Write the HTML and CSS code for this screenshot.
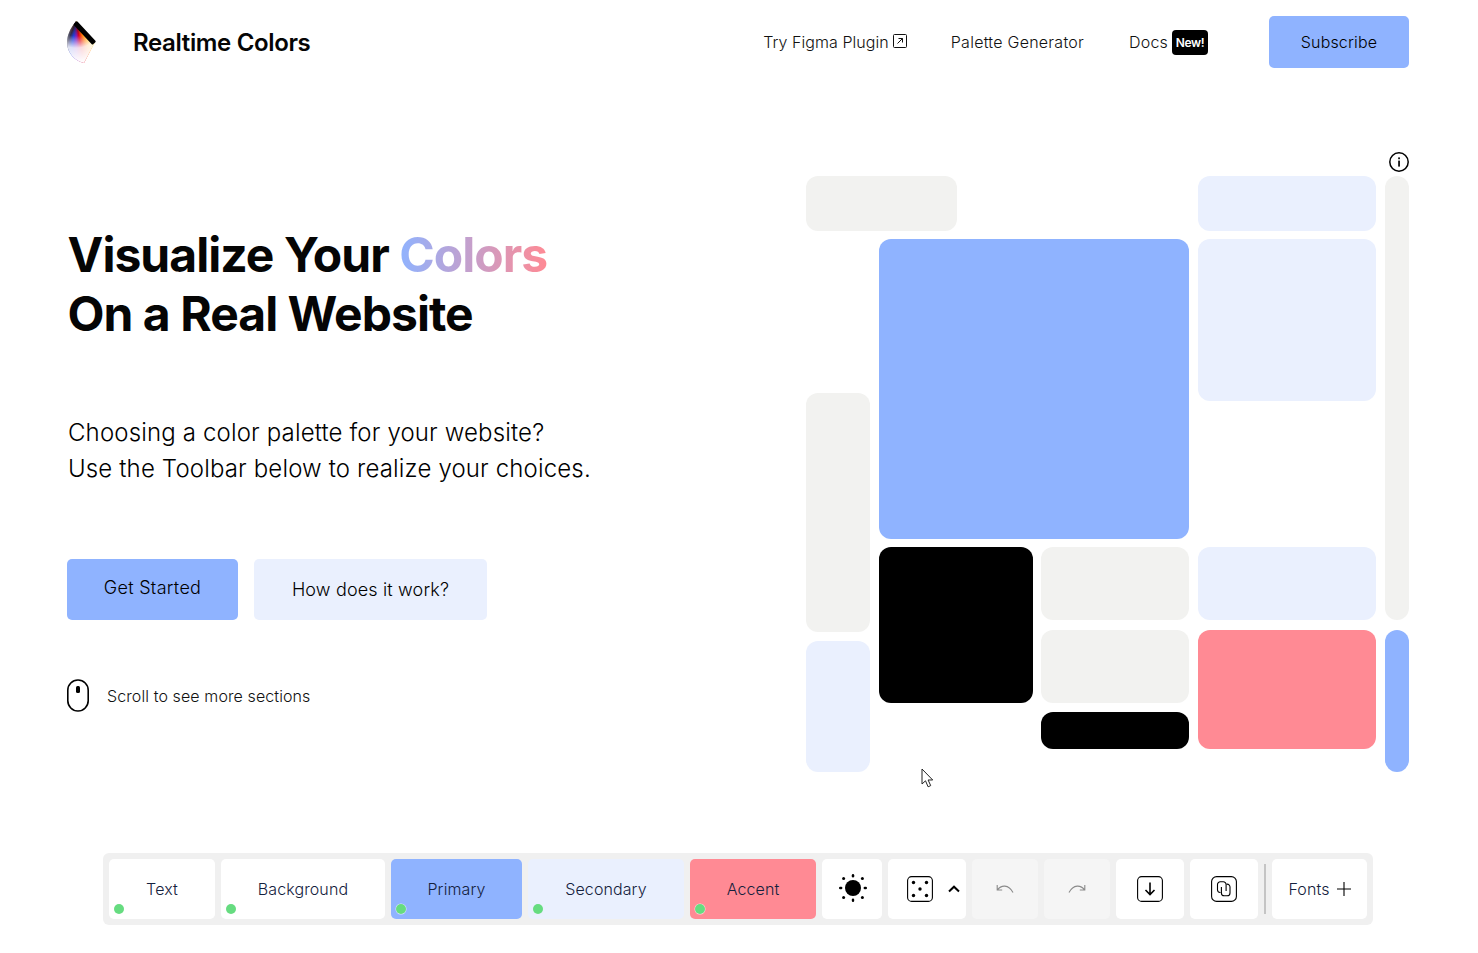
FILE: index.html
```html
<!DOCTYPE html>
<html lang="en">
<head>
<meta charset="utf-8">
<title>Realtime Colors</title>
<link rel="stylesheet" href="styles.css">
</head>
<body>
<div class="page">
  <header class="nav">
    <div class="brand">
      <div class="logo"><span class="logo-fan"></span><span class="logo-bar"></span></div>
      <span class="brand-name">Realtime Colors</span>
    </div>
    <nav class="links">
      <a class="link figma">Try Figma Plugin
        <svg class="ext" width="14" height="14" viewBox="0 0 14 14" fill="none" stroke="#111" stroke-width="1"><rect x="0.5" y="0.5" width="13" height="13" rx="1"/><path d="M4.500 9.500 9.500 4.500M5.500 4.500h4v4"/></svg>
      </a>
      <a class="link palette">Palette Generator</a>
      <a class="link docs">Docs <span class="new">New!</span></a>
      <a class="btn subscribe">Subscribe</a>
    </nav>
  </header>

  <main class="hero">
    <section class="copy">
      <h1>Visualize Your <span class="grad">Colors</span><br>On a Real Website</h1>
      <p class="lead">Choosing a color palette for your website?<br>Use the Toolbar below to realize your choices.</p>
      <div class="actions">
        <a class="btn start">Get Started</a>
        <a class="btn how">How does it work?</a>
      </div>
      <div class="scroll">
        <svg width="23" height="33" viewBox="0 0 23 33" fill="none"><rect x="0.800" y="1" width="20.400" height="31" rx="10.200" stroke="#000" stroke-width="1.600"/><rect x="9" y="7" width="4" height="7" rx="1.500" fill="#000"/></svg>
        <span>Scroll to see more sections</span>
      </div>
    </section>

    <section class="side">
      <svg class="info" width="20" height="20" viewBox="0 0 20 20" fill="none"><circle cx="10" cy="10" r="9.200" stroke="#000" stroke-width="1.500"/><rect x="9.200" y="8.600" width="1.700" height="6" fill="#000"/><rect x="9.200" y="5.400" width="1.700" height="1.800" fill="#000"/></svg>
      <div class="mosaic">
        <div class="m m-a gray"></div>
        <div class="m m-b sec"></div>
        <div class="m m-c gray"></div>
        <div class="m m-d pri"></div>
        <div class="m m-e sec"></div>
        <div class="m m-f gray"></div>
        <div class="m m-g sec"></div>
        <div class="m m-h blk"></div>
        <div class="m m-i gray"></div>
        <div class="m m-j sec"></div>
        <div class="m m-k gray"></div>
        <div class="m m-l acc"></div>
        <div class="m m-m pri"></div>
        <div class="m m-n blk"></div>
      </div>
    </section>
  </main>

  <svg class="cursor" width="13" height="20" viewBox="0 0 13 20" fill="#fff" stroke="#222" stroke-width="1"><path d="M1 1v15l3.500-3.200 2.600 6 2.600-1.200-2.600-5.600h4.600z"/></svg>

  <div class="toolbar">
    <button class="tool w-text"><span>Text</span><i class="dot"></i></button>
    <button class="tool w-bg"><span>Background</span><i class="dot"></i></button>
    <button class="tool w-pri"><span>Primary</span><i class="dot ring"></i></button>
    <button class="tool w-sec"><span>Secondary</span><i class="dot"></i></button>
    <button class="tool w-acc"><span>Accent</span><i class="dot ring"></i></button>
    <button class="tool w-sun" aria-label="Theme">
      <svg class="sun" width="30" height="30" viewBox="0 0 30 30" fill="#000"><circle cx="15" cy="15" r="8"/><rect x="13.800" y="1" width="2.400" height="3.400" rx="1.200"/><rect x="13.800" y="25.600" width="2.400" height="3.400" rx="1.200"/><rect x="1" y="13.800" width="3.400" height="2.400" rx="1.200"/><rect x="25.600" y="13.800" width="3.400" height="2.400" rx="1.200"/><circle cx="5.600" cy="5.600" r="1.500"/><circle cx="24.400" cy="5.600" r="1.500"/><circle cx="5.600" cy="24.400" r="1.500"/><circle cx="24.400" cy="24.400" r="1.500"/></svg>
    </button>
    <button class="tool w-dice" aria-label="Randomize">
      <svg width="26" height="26" viewBox="0 0 26 26" fill="#000"><rect x="0.600" y="0.600" width="24.800" height="24.800" rx="4" fill="none" stroke="#000" stroke-width="1.100"/><circle cx="6.500" cy="6.500" r="1.700"/><circle cx="19.500" cy="6.500" r="1.700"/><circle cx="13" cy="13" r="1.700"/><circle cx="6.500" cy="19.500" r="1.700"/><circle cx="19.500" cy="19.500" r="1.700"/></svg>
      <svg class="chev" width="12" height="8" viewBox="0 0 12 8" fill="none" stroke="#000" stroke-width="2"><path d="M1 6.500 6 1.700l5 4.800"/></svg>
    </button>
    <button class="tool w-hist off" aria-label="Undo">
      <svg width="18" height="10" viewBox="0 0 18 10" fill="none" stroke="#8a8a8a" stroke-width="1.100"><path d="M1.200 1v5h5M1.400 5.800C5 1 12.500-.2 17 8.600"/></svg>
    </button>
    <button class="tool w-hist off" aria-label="Redo">
      <svg width="18" height="10" viewBox="0 0 18 10" fill="none" stroke="#8a8a8a" stroke-width="1.100"><path d="M16.800 1v5h-5M16.600 5.800C13 1 5.500-.2 1 8.600"/></svg>
    </button>
    <button class="tool w-act" aria-label="Export">
      <svg class="dl" width="26" height="26" viewBox="0 0 26 26" fill="none" stroke="#000"><rect x="0.600" y="0.600" width="24.800" height="24.800" rx="4" stroke-width="1.100"/><path d="M13 6.500v12M8.500 14l4.500 4.500 4.500-4.500" stroke-width="1.600"/></svg>
    </button>
    <button class="tool w-act" aria-label="Share">
      <svg width="26" height="26" viewBox="0 0 26 26" fill="none" stroke="#000" stroke-width="1.100"><rect x="0.600" y="0.600" width="24.800" height="24.800" rx="5"/><path d="M9.500 16.500A2.800 2.800 0 0 1 6.500 14V8.500a2.800 2.800 0 0 1 2.800-2.800h3a2.800 2.800 0 0 1 2.800 2.800V15"/><path d="M15.500 8.200h.3a2.800 2.800 0 0 1 3.200 2.800v6a2.800 2.800 0 0 1-2.800 2.800h-3a2.800 2.800 0 0 1-2.800-2.800V11"/></svg>
    </button>
    <span class="sep"></span>
    <button class="tool w-fonts"><span>Fonts</span>
      <svg width="14" height="14" viewBox="0 0 14 14" stroke="#000" stroke-width="1.100"><path d="M7 0v14M0 7h14"/></svg>
    </button>
  </div>
</div>
</body>
</html>
```
FILE: styles.css
```css
* { box-sizing: border-box; }
html, body { margin: 0; height: 100%; }
body {
  background: #fff;
  color: #0a0a0a;
  font-family: Inter, "Liberation Sans", sans-serif;
  overflow: hidden;
}
a { color: inherit; text-decoration: none; }
.page { position: relative; width: 1478px; height: 953px; }

.nav {
  display: flex;
  justify-content: space-between;
  align-items: center;
  padding: 16px 69px 0 67px;
}
.brand { display: flex; align-items: center; gap: 36px; }
.logo { position: relative; width: 30px; height: 46px; }
.logo-fan {
  position: absolute;
  left: 0;
  top: 2px;
  width: 30px;
  height: 44px;
  background:
    radial-gradient(circle at 9px 0, rgba(30,10,10,.9) 0, rgba(60,10,0,.45) 8px, rgba(255,255,255,0) 15px, rgba(255,255,255,.85) 27px, #fff 42px),
    conic-gradient(from 135deg at 9px 0, #ffe000 0deg, #ffc000 12deg, #ff7000 22deg, #e00020 34deg, #8020c0 44deg, #2040e0 54deg, #303050 66deg, #888 84deg);
  clip-path: path("M9 0 C3 8 0 14 0 21 C0 32 8 40 17 42 L28 21 Z");
}
.logo-bar {
  position: absolute;
  left: 9.500px;
  top: 2px;
  width: 28px;
  height: 5px;
  background: #000;
  border-radius: 1px;
  transform-origin: 0 0;
  transform: rotate(47deg);
}
.brand-name { font-size: 24px; font-weight: 600; letter-spacing: -0.35px; color: #050505; }
.links { display: flex; align-items: center; }
.link { font-size: 16px; font-weight: 300; color: #111; letter-spacing: 0.25px; white-space: nowrap; }
.figma { display: flex; align-items: center; gap: 4px; margin-right: 44px; letter-spacing: 0.06px; }
.ext { margin-top: -3px; }
.palette { margin-right: 45px; }
.docs { display: flex; align-items: center; gap: 4px; margin-right: 61px; letter-spacing: 0.2px; }
.new {
  background: #000;
  color: #fff;
  font-size: 12px;
  font-weight: 600;
  letter-spacing: -0.35px;
  border-radius: 4px;
  width: 36px;
  height: 25px;
  display: flex;
  align-items: center;
  justify-content: center;
}
.btn { display: flex; align-items: center; justify-content: center; border-radius: 5px; color: #111a2c; }
.subscribe { width: 140px; height: 52px; background: #8fb3ff; font-size: 16px; font-weight: 300; letter-spacing: 0.16px; color: #000; }

.hero {
  display: flex;
  justify-content: space-between;
  padding: 0 69px 0 68px;
  margin-top: 85px;
}
.copy { display: flex; flex-direction: column; padding-top: 72px; }
h1 {
  margin: 0 0 0 -0.5px;
  font-size: 48px;
  line-height: 59px;
  font-weight: 700;
  letter-spacing: -0.96px;
  color: #050505;
}
.grad {
  background: linear-gradient(90deg, #8fb3ff, #ff8a94);
  -webkit-background-clip: text;
  background-clip: text;
  color: transparent;
}
.lead { margin: 72px 0 0; font-size: 24px; font-weight: 300; line-height: 36px; letter-spacing: 0.15px; color: #000; }
.actions { display: flex; gap: 16px; margin: 72px 0 0 -1px; }
.start { width: 171px; height: 61px; background: #8fb3ff; font-size: 18px; font-weight: 300; letter-spacing: 0.3px; padding-bottom: 4px; color: #000; }
.how { width: 233px; height: 61px; background: #eaf0fe; font-size: 18px; font-weight: 300; letter-spacing: 0.16px; color: #000; }
.scroll { display: flex; align-items: center; gap: 17px; margin: 59px 0 0 -1px; font-size: 16px; font-weight: 300; letter-spacing: 0.1px; color: #111; }

.side { display: flex; flex-direction: column; align-items: flex-end; }
.info { display: block; margin-top: -1px; }
.mosaic {
  margin-top: 4px;
  display: grid;
  grid-template-columns: 64px 9px 78px 76px 8px 148px 9px 178px 9px 24px;
  grid-template-rows: 55px 8px 154px 8px 138px 8px 73px 10px 2px 9px 62px 9px 37px 23px;
}
.m { border-radius: 12px; }
.gray { background: #f2f2f0; }
.sec { background: #eaf0fe; }
.pri { background: #8fb3ff; }
.blk { background: #000; }
.acc { background: #ff8a94; }
.m-a { grid-area: 1 / 1 / 2 / 4; }
.m-b { grid-area: 1 / 8 / 2 / 9; }
.m-c { grid-area: 1 / 10 / 8 / 11; }
.m-d { grid-area: 3 / 3 / 6 / 7; }
.m-e { grid-area: 3 / 8 / 5 / 9; }
.m-f { grid-area: 4 / 1 / 10 / 2; }
.m-g { grid-area: 11 / 1 / 15 / 2; }
.m-h { grid-area: 7 / 3 / 12 / 5; }
.m-i { grid-area: 7 / 6 / 8 / 7; }
.m-j { grid-area: 7 / 8 / 8 / 9; }
.m-k { grid-area: 9 / 6 / 12 / 7; }
.m-l { grid-area: 9 / 8 / 14 / 9; }
.m-m { grid-area: 9 / 10 / 15 / 11; }
.m-n { grid-area: 13 / 6 / 14 / 7; }

.cursor { position: absolute; left: 921px; top: 768px; }

.toolbar {
  position: absolute;
  left: 103px;
  top: 853px;
  width: 1270px;
  height: 72px;
  padding: 6px;
  display: flex;
  align-items: center;
  gap: 6px;
  background: #f0f0f0;
  border-radius: 6px;
}
.tool {
  position: relative;
  height: 60px;
  flex: none;
  border: 0;
  padding: 0;
  border-radius: 5px;
  background: #fff;
  color: #14213d;
  font: 300 16px Inter, "Liberation Sans", sans-serif;
  letter-spacing: 0.1px;
  display: flex;
  align-items: center;
  justify-content: center;
}
.tool > span { display: block; }
.dot {
  position: absolute;
  left: 5px;
  bottom: 5px;
  width: 10px;
  height: 10px;
  border-radius: 50%;
  background: #66dc80;
}
.dot.ring { box-shadow: 0 0 0 .5px rgba(255,255,255,.7); }
.w-text { width: 106px; }
.w-bg { width: 164px; }
.w-pri { width: 131px; background: #8fb3ff; }
.w-sec { width: 156px; background: #eaf0fe; }
.w-acc { width: 126px; background: #ff8a94; }
.w-sun { width: 60px; }
.sun { margin: -2px 0 0 1px; }
.w-dice { width: 78px; gap: 15px; justify-content: flex-start; padding-left: 19px; }
.chev { margin-top: -1px; }
.w-hist { width: 66px; }
.off { background: #f5f5f5; }
.w-act { width: 68px; }
.dl { margin-top: -1px; }
.sep { width: 2px; height: 50px; background: #c4c4c4; flex: none; }
.w-fonts { width: 95px; gap: 7px; }
```
